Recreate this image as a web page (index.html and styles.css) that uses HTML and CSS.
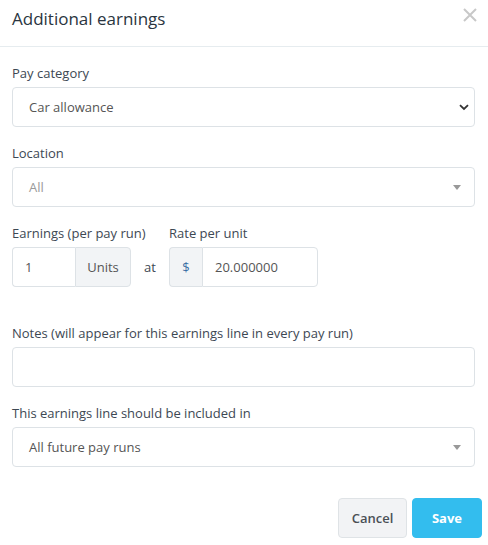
FILE: index.html
```html
<!DOCTYPE html>
<html>
<head>
<meta charset="utf-8">
<link rel="stylesheet" href="styles.css">
</head>
<body>
<div class="modal">
  <div class="modal-header">
    <h2 class="title">Additional earnings</h2>
    <span class="close">
      <svg width="14" height="14" viewBox="0 0 14 14"><path d="M1 1L13 13M13 1L1 13" stroke="#c8c8c8" stroke-width="2"/></svg>
    </span>
  </div>
  <div class="modal-body">
    <div class="group">
      <div class="label">Pay category</div>
      <div class="control select">
        <span class="value">Car allowance</span>
        <svg class="chev" width="10" height="7" viewBox="0 0 10 7"><path d="M1 1.2L5 5L9 1.2" fill="none" stroke="#333" stroke-width="1.8"/></svg>
      </div>
    </div>
    <div class="group">
      <div class="label">Location</div>
      <div class="control select">
        <span class="value placeholder">All</span>
        <svg class="caret" width="8" height="5" viewBox="0 0 8 5"><path d="M0 0H8L4 5Z" fill="#999"/></svg>
      </div>
    </div>
    <div class="row">
      <div class="col col-earn">
        <div class="label nowrap">Earnings (per pay run)</div>
        <div class="igroup">
          <div class="ifield units-in">1</div>
          <div class="addon units">Units</div>
        </div>
      </div>
      <div class="at">at</div>
      <div class="col">
        <div class="label">Rate per unit</div>
        <div class="igroup">
          <div class="addon dollar">$</div>
          <div class="ifield rate-in">20.000000</div>
        </div>
      </div>
    </div>
    <div class="group">
      <div class="label">Notes (will appear for this earnings line in every pay run)</div>
      <div class="control"></div>
    </div>
    <div class="group">
      <div class="label">This earnings line should be included in</div>
      <div class="control select">
        <span class="value">All future pay runs</span>
        <svg class="caret" width="8" height="5" viewBox="0 0 8 5"><path d="M0 0H8L4 5Z" fill="#999"/></svg>
      </div>
    </div>
  </div>
  <div class="modal-footer">
    <button class="btn cancel">Cancel</button>
    <button class="btn save">Save</button>
  </div>
</div>
</body>
</html>
```
FILE: styles.css
```css
* { box-sizing: border-box; }
html, body { margin: 0; padding: 0; background: #fff; }
body {
  font-family: "Open Sans", "Liberation Sans", sans-serif;
  color: #3a4550;
  width: 488px;
}
.modal-header {
  height: 47px;
  border-bottom: 1px solid #e6ecef;
  display: flex;
  align-items: flex-start;
  justify-content: space-between;
  padding: 8px 12px 0 12px;
}
.title {
  margin: 0;
  font-size: 17px;
  font-weight: 400;
  line-height: 22px;
  color: #2a3540;
}
.close { display: block; margin-right: -1px; }
.close svg { display: block; }
.modal-body {
  padding: 16px 13px 0 12px;
}
.group { margin-bottom: 16px; }
.label {
  font-size: 13px;
  line-height: 20px;
  height: 20px;
  margin-bottom: 4px;
  color: #3d4853;
}
.nowrap { white-space: nowrap; }
.control {
  height: 40px;
  border: 1px solid #dde2e6;
  border-radius: 4px;
  display: flex;
  align-items: center;
  padding: 0 16px;
  font-size: 13px;
  color: #555;
}
.select { justify-content: space-between; }
.value { color: #555; }
.placeholder { color: #9a9a9a; }
.chev { margin-right: -11px; }
.caret { margin-right: -3px; }
.row {
  display: flex;
  align-items: flex-end;
  margin-bottom: 36px;
}
.col-earn { width: 119px; }
.igroup { display: flex; height: 40px; }
.ifield, .addon {
  height: 40px;
  display: flex;
  align-items: center;
  font-size: 13px;
  border: 1px solid #dde2e6;
}
.ifield { color: #555; padding-left: 12px; background: #fff; }
.addon { background: #f2f4f6; color: #555; justify-content: center; }
.units-in { width: 63px; border-radius: 4px 0 0 4px; border-right: 0; }
.units { width: 56px; border-radius: 0 4px 4px 0; }
.at {
  width: 38px;
  height: 40px;
  display: flex;
  align-items: center;
  justify-content: center;
  font-size: 13px;
  color: #3d4853;
}
.dollar { width: 33px; border-radius: 4px 0 0 4px; border-right: 0; color: #3a6ea5; }
.rate-in { width: 116px; border-radius: 0 4px 4px 0; }
.modal-footer {
  display: flex;
  justify-content: flex-end;
  gap: 5px;
  padding: 15px 6px 0 0;
}
.btn {
  height: 40px;
  border-radius: 4px;
  font-family: inherit;
  font-size: 13px;
  font-weight: 600;
  cursor: pointer;
}
.cancel {
  width: 69px;
  background: #f2f3f5;
  border: 1px solid #dfe3e6;
  color: #4a4f55;
}
.save {
  width: 70px;
  background: #33bdee;
  border: 1px solid #33bdee;
  color: #fff;
  font-weight: 700;
}
```
